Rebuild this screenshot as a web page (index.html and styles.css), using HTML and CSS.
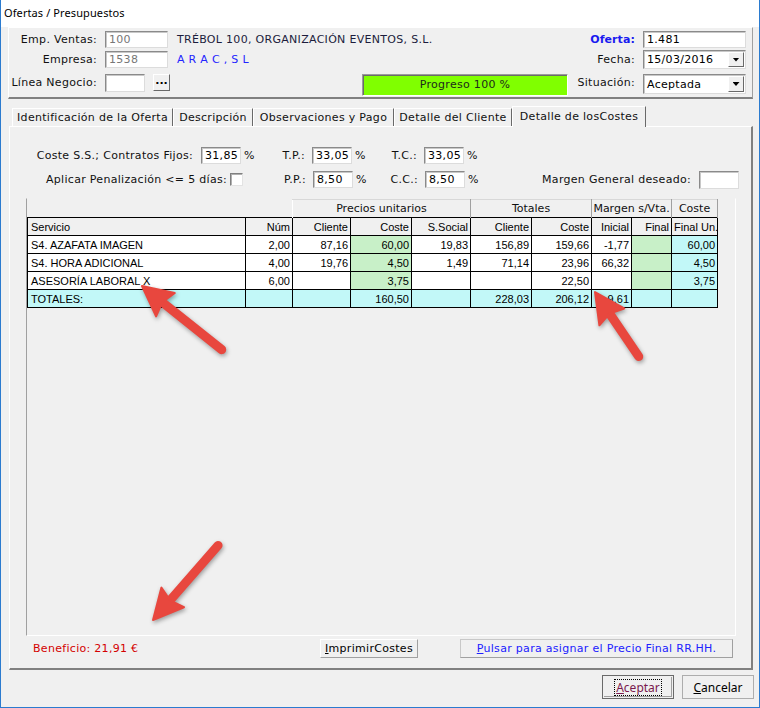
FILE: index.html
```html
<!DOCTYPE html>
<html lang="es">
<head>
<meta charset="utf-8">
<title>Ofertas / Presupuestos</title>
<link rel="stylesheet" href="styles.css">
</head>
<body>
<div class="window">
  <div class="titlebar">Ofertas / Presupuestos</div>

  <div class="header">
    <div class="hrow r1">
      <span class="hlabel">Emp. Ventas:</span>
      <div class="field w63 dis">100</div>
      <span class="company">TRÉBOL 100, ORGANIZACIÓN EVENTOS, S.L.</span>
      <span class="spacer"></span>
      <span class="rlabel oferta">Oferta:</span>
      <div class="field w103">1.481</div>
    </div>
    <div class="hrow r2">
      <span class="hlabel">Empresa:</span>
      <div class="field w63 h17 dis">1538</div>
      <span class="company blue">A R A C , S L</span>
      <span class="spacer"></span>
      <span class="rlabel">Fecha:</span>
      <div class="combo w103 h19"><span class="ctext">15/03/2016</span><span class="drop"></span></div>
    </div>
    <div class="hrow r3">
      <span class="hlabel">Línea Negocio:</span>
      <div class="field w40 h18"></div>
      <div class="dots">...</div>
      <div class="progress">Progreso 100 %</div>
      <span class="spacer"></span>
      <span class="rlabel">Situación:</span>
      <div class="combo w103 h20"><span class="ctext">Aceptada</span><span class="drop"></span></div>
    </div>
  </div>

  <div class="tabs">
    <div class="tab t1">Identificación de la Oferta</div>
    <div class="tab t2">Descripción</div>
    <div class="tab t3">Observaciones y Pago</div>
    <div class="tab t4">Detalle del Cliente</div>
    <div class="tab active">Detalle de losCostes</div>
  </div>

  <div class="panel">
    <div class="frow">
      <span class="flabel la1">Coste S.S.; Contratos Fijos:</span>
      <div class="field w40">31,85</div>
      <span class="pct">%</span>
      <span class="flabel la2">T.P.:</span>
      <div class="field w40">33,05</div>
      <span class="pct">%</span>
      <span class="flabel la3">T.C.:</span>
      <div class="field w40">33,05</div>
      <span class="pct">%</span>
    </div>
    <div class="frow">
      <span class="flabel lb1">Aplicar Penalización &lt;= 5 días:</span>
      <span class="check"></span>
      <span class="flabel lb2">P.P.:</span>
      <div class="field w40">8,50</div>
      <span class="pct">%</span>
      <span class="flabel la3">C.C.:</span>
      <div class="field w40">8,50</div>
      <span class="pct">%</span>
      <span class="spacer"></span>
      <span class="flabel">Margen General deseado:</span>
      <div class="field w40 h18"></div>
    </div>

    <div class="gridbox">
      <table class="costs">
        <colgroup>
          <col class="k1"><col class="k2"><col class="k3"><col class="k4"><col class="k5">
          <col class="k6"><col class="k7"><col class="k8"><col class="k9"><col class="k10">
        </colgroup>
        <tr class="grp">
          <th class="blank" colspan="2"></th>
          <th colspan="3">Precios unitarios</th>
          <th colspan="2">Totales</th>
          <th colspan="2">Margen s/Vta.</th>
          <th>Coste</th>
        </tr>
        <tr class="hdr">
          <th class="l">Servicio</th><th>Núm</th><th>Cliente</th><th>Coste</th><th>S.Social</th>
          <th>Cliente</th><th>Coste</th><th>Inicial</th><th>Final</th><th>Final Un.</th>
        </tr>
        <tr>
          <td class="l">S4. AZAFATA IMAGEN</td><td>2,00</td><td>87,16</td><td class="g">60,00</td><td>19,83</td>
          <td>156,89</td><td>159,66</td><td>-1,77</td><td class="g"></td><td class="c">60,00</td>
        </tr>
        <tr>
          <td class="l">S4. HORA ADICIONAL</td><td>4,00</td><td>19,76</td><td class="g">4,50</td><td>1,49</td>
          <td>71,14</td><td>23,96</td><td>66,32</td><td class="g"></td><td class="c">4,50</td>
        </tr>
        <tr>
          <td class="l">ASESORÍA LABORAL X</td><td>6,00</td><td></td><td class="g">3,75</td><td></td>
          <td></td><td>22,50</td><td></td><td class="g"></td><td class="c">3,75</td>
        </tr>
        <tr class="tot">
          <td class="l">TOTALES:</td><td></td><td></td><td>160,50</td><td></td>
          <td>228,03</td><td>206,12</td><td>9,61</td><td></td><td></td>
        </tr>
      </table>
    </div>

    <div class="brow">
      <span class="benef">Beneficio: 21,91 €</span>
      <div class="btn print"><u>I</u>mprimirCostes</div>
      <div class="btn assign"><u>P</u>ulsar para asignar el Precio Final RR.HH.</div>
    </div>
  </div>

  <div class="footer">
    <div class="dbtn default"><span class="focus"><u>A</u>ceptar</span></div>
    <div class="dbtn"><u>C</u>ancelar</div>
  </div>

  <svg class="arrows" width="760" height="708" viewBox="0 0 760 708">
    <g transform="translate(141 286) rotate(218.6)">
      <line x1="-24" y1="0" x2="-102" y2="0"/>
      <polygon points="0,0 -30,-15 -26,0 -30,15"/>
    </g>
    <g transform="translate(594 292) rotate(235.9)">
      <line x1="-24" y1="0" x2="-78" y2="0"/>
      <polygon points="0,0 -30,-15 -26,0 -30,15"/>
    </g>
    <g transform="translate(152 620) rotate(131.1)">
      <line x1="-24" y1="0" x2="-99" y2="0"/>
      <polygon points="0,0 -30,-15 -26,0 -30,15"/>
    </g>
  </svg>
</div>
</body>
</html>
```
FILE: styles.css
```css
* { box-sizing: border-box; }
html, body { margin: 0; padding: 0; }
body {
  width: 760px;
  height: 708px;
  background: #f0f0f0;
  font-family: "DejaVu Sans", Verdana, sans-serif;
  font-size: 11px;
  letter-spacing: 0.3px;
  color: #111;
}
.window {
  position: relative;
  width: 760px;
  height: 708px;
  border: 1px solid #2b7bcf;
  border-top: none;
  background: #f0f0f0;
  display: flex;
  flex-direction: column;
  overflow: hidden;
}
.titlebar {
  height: 27px;
  flex: none;
  background: #fff;
  font-family: "Noto Sans", sans-serif;
  font-size: 11px;
  letter-spacing: 0.1px;
  line-height: 26px;
  padding-left: 3px;
  color: #000;
}

/* header group */
.header {
  flex: none;
  margin: 0 6px 0 7px;
  border: 1px solid;
  border-color: #fff #a0a0a0 #808080 #fff;
  border-bottom-width: 2px;
  padding: 3px 6px 1px 0;
}
.hrow { display: flex; align-items: center; }
.r1 { height: 17px; margin-bottom: 2px; }
.r2 { height: 19px; margin-bottom: 5px; }
.r3 { height: 22px; align-items: flex-start; }
.hlabel { width: 88px; text-align: right; margin-right: 8px; flex: none; white-space: nowrap; }
.r3 .hlabel { line-height: 18px; }
.company { margin-left: 9px; color: #1c1c3c; white-space: nowrap; }
.company.blue { color: #2424ff; }
.spacer { flex: 1; }
.rlabel { margin-right: 8px; white-space: nowrap; }
.r3 .rlabel { line-height: 18px; }
.oferta { color: #1a1af0; font-weight: bold; letter-spacing: 0.1px; }

.field {
  flex: none;
  height: 17px;
  background: #fff;
  border: 1px solid;
  border-color: #8a8a8a #dcdcdc #dcdcdc #8a8a8a;
  box-shadow: inset 1px 1px 0 #c8c8c8;
  padding: 0 3px;
  line-height: 16px;
  color: #000;
  white-space: nowrap;
}
.field.dis { color: #777; }
.w63 { width: 63px; }
.w40 { width: 40px; }
.w103 { width: 103px; }
.h17 { height: 17px; }
.h18 { height: 18px; }
.h19 { height: 19px; }
.h20 { height: 20px; }

.combo {
  flex: none;
  display: flex;
  align-items: center;
  background: #fff;
  border: 1px solid;
  border-color: #8a8a8a #dcdcdc #dcdcdc #8a8a8a;
  box-shadow: inset 1px 1px 0 #c8c8c8;
  padding: 1px 1px 1px 3px;
  color: #000;
}
.ctext { flex: 1; line-height: 14px; padding-top: 1px; }
.drop {
  width: 16px;
  height: 100%;
  flex: none;
  background: #f0f0f0;
  border: 1px solid;
  border-color: #fff #696969 #696969 #fff;
  display: flex;
  align-items: center;
  justify-content: center;
}
.drop::after {
  content: "";
  width: 7px;
  height: 4px;
  background: #000;
  clip-path: polygon(0 0, 100% 0, 50% 100%);
}

.dots {
  flex: none;
  width: 17px;
  height: 17px;
  margin-left: 8px;
  background: #f0f0f0;
  border: 1px solid;
  border-color: #fff #696969 #696969 #fff;
  font-weight: bold;
  letter-spacing: 0;
  text-align: center;
  line-height: 12px;
  color: #000;
}
.progress {
  flex: none;
  width: 206px;
  height: 22px;
  margin-left: 192px;
  background: #80ff00;
  border: 1px solid;
  border-color: #9a9a9a #fff #fff #9a9a9a;
  box-shadow: inset 1px 1px 0 #6a6a6a;
  text-align: center;
  line-height: 20px;
  color: #1c2a1c;
}

/* tabs */
.tabs {
  flex: none;
  display: flex;
  align-items: flex-end;
  height: 20px;
  margin: 7px 0 0 11px;
  position: relative;
  z-index: 1;
}
.tab {
  height: 18px;
  border: 1px solid;
  border-bottom: none;
  border-color: #fff #696969 transparent #fff;
  background: #f0f0f0;
  text-align: center;
  line-height: 17px;
  white-space: nowrap;
}
.t1 { width: 161px; }
.t2 { width: 80px; }
.t3 { width: 141px; }
.t4 { width: 118px; }
.tab.active {
  width: 134px;
  height: 21px;
  margin-bottom: -1px;
  line-height: 19px;
}

/* panel */
.panel {
  flex: none;
  height: 544px;
  margin: 0 6px 0 8px;
  border: 1px solid;
  border-color: #fff #808080 #808080 #fff;
  border-right-width: 2px;
  border-bottom-width: 2px;
  padding-top: 20px;
  display: flex;
  flex-direction: column;
}
.frow { display: flex; align-items: center; height: 17px; margin-right: 12px; }
.frow + .frow { margin-top: 7px; }
.flabel { flex: none; text-align: right; margin-right: 8px; white-space: nowrap; }
.la1 { width: 183px; }
.la2 { width: 36px; margin-right: 7px; }
.la3 { width: 37px; margin-right: 7px; }
.lb1 { width: 217px; margin-right: 3px; }
.lb2 { width: 63px; margin-right: 7px; }
.pct { flex: none; width: 25px; margin-left: 3px; }
.check {
  flex: none;
  width: 13px;
  height: 13px;
  background: #fff;
  border: 1px solid;
  border-color: #808080 #e3e3e3 #e3e3e3 #808080;
  box-shadow: inset 1px 1px 0 #b0b0b0;
}

.gridbox {
  flex: none;
  width: 710px;
  height: 438px;
  margin: 10px 0 0 16px;
  border: 1px solid;
  border-color: #f0f0f0 #fff #fff #a0a0a0;
}
.costs {
  border-collapse: collapse;
  table-layout: fixed;
  width: 691px;
  font-family: "Liberation Sans", Arial, sans-serif;
  font-size: 11px;
  letter-spacing: 0;
  color: #000;
}
.k1 { width: 218px; }
.k2 { width: 47px; }
.k3 { width: 58px; }
.k4 { width: 61px; }
.k5 { width: 59px; }
.k6 { width: 61px; }
.k7 { width: 60px; }
.k8 { width: 40px; }
.k9 { width: 40px; }
.k10 { width: 46px; }
.costs tr { height: 18px; }
.costs td, .costs .hdr th {
  border: 1px solid #000;
  padding: 0 2px 0 2px;
  text-align: right;
  white-space: nowrap;
  overflow: hidden;
  font-weight: normal;
  background: #fff;
}
.costs .hdr th { background: #f0f0f0; }
.costs td.l, .costs .hdr th.l { text-align: left; padding-left: 3px; }
.costs .grp th {
  font-family: "DejaVu Sans", Verdana, sans-serif;
  font-weight: normal;
  font-size: 11px;
  letter-spacing: 0;
  white-space: nowrap;
  overflow: hidden;
  color: #111;
  background: #f0f0f0;
  border-top: 1px solid #d8d8d8;
  border-left: 1px solid #fff;
  border-right: 1px solid #a0a0a0;
  text-align: center;
  padding: 0;
}
.costs .grp th.blank { border: none; background: transparent; }
.costs td.g { background: #c8f0c8; }
.costs td.c { background: #c2f8f8; }
.costs .tot td { background: #c2f8f8; }

.brow { display: flex; align-items: center; height: 19px; margin-top: 3px; }
.benef { width: 310px; padding-left: 23px; color: #d40000; flex: none; }
.btn {
  flex: none;
  height: 19px;
  background: #f0f0f0;
  border: 1px solid;
  border-color: #fff #a0a0a0 #a0a0a0 #fff;
  text-align: center;
  line-height: 17px;
  color: #000;
  white-space: nowrap;
}
.print { width: 98px; }
.assign { width: 273px; margin-left: 42px; color: #2020ff; border-color: #c8c8c8 #a0a0a0 #a0a0a0 #c8c8c8; }

.footer {
  flex: none;
  display: flex;
  justify-content: flex-end;
  gap: 8px;
  margin-top: 5px;
  padding-right: 5px;
}
.dbtn {
  width: 72px;
  height: 24px;
  border: 1px solid #adadad;
  background: #f0f0f0;
  font-family: "Noto Sans", sans-serif;
  font-size: 12px;
  letter-spacing: 0;
  display: flex;
  align-items: center;
  justify-content: center;
  color: #000;
}
.dbtn.default {
  border: 1px solid #6a6a6a;
  box-shadow: inset 0 0 0 1px #f0f0f0, inset -1px -1px 0 1px #a0a0a0;
  color: #7a1a4e;
}
.focus { border: 1px dotted #000; padding: 0 1px; line-height: 15px; }

.arrows {
  position: absolute;
  left: 0;
  top: 0;
  pointer-events: none;
  filter: drop-shadow(1px 2px 2px rgba(0, 0, 0, 0.35));
}
.arrows line { stroke: #e8473e; stroke-width: 9; stroke-linecap: round; }
.arrows polygon { fill: #e8473e; stroke: #e8473e; stroke-width: 2; stroke-linejoin: round; }
```
